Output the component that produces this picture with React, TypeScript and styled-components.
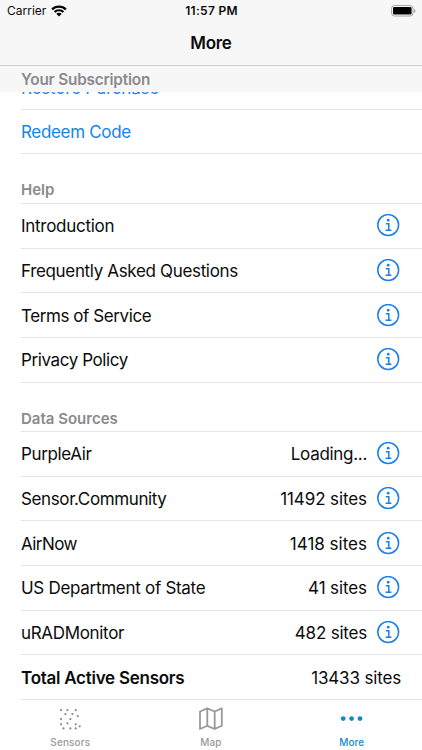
import React from "react";
import styled, { createGlobalStyle } from "styled-components";

const GlobalStyle = createGlobalStyle`
  * { box-sizing: border-box; }
  body { margin: 0; background: #fff; font-family: Inter, "Liberation Sans", sans-serif; color: #0b0b0b; }
`;

const Screen = styled.div`
  width: 422px;
  height: 750px;
  overflow: hidden;
  display: flex;
  flex-direction: column;
  background: #fff;
`;

const NavBar = styled.header`
  height: 66px;
  flex: none;
  background: #f7f7f7;
  border-bottom: 1px solid #cfcfcf;
`;

const StatusBar = styled.div`
  height: 22px;
  display: grid;
  grid-template-columns: 1fr auto 1fr;
  align-items: center;
  padding: 0 6px 0 7px;
  font-size: 12px;
  line-height: 22px;
`;

const Carrier = styled.div`
  display: flex;
  align-items: center;
  gap: 5px;
`;

const Battery = styled.div`
  display: flex;
  justify-content: flex-end;
`;

const Label = styled.span<{ $track?: number; $weight?: number }>`
  white-space: nowrap;
  letter-spacing: ${(p) => p.$track ?? 0}px;
  font-weight: ${(p) => p.$weight ?? 400};
`;

const Title = styled.h1`
  margin: 0;
  height: 43px;
  line-height: 43px;
  text-align: center;
  font-size: 17px;
  font-weight: 600;
  letter-spacing: -0.3px;
`;

const StickyHeading = styled.h2`
  margin: 0;
  flex: none;
  height: 26px;
  padding-left: 21px;
  background: #f7f7f7;
  color: #8a8a8e;
  font-size: 15.3px;
  font-weight: 600;
  line-height: 27px;
`;

const List = styled.main`
  height: 608.2px;
  flex: none;
  overflow: hidden;
  padding-left: 21px;
`;

const ClippedRow = styled.div`
  height: 17.8px;
  overflow: hidden;
  display: flex;
  align-items: flex-end;
  border-bottom: 1px solid #e5e5e7;
  color: #1683f0;
  font-size: 17px;
  line-height: 41px;
`;

const Row = styled.div<{ $link?: boolean; $plain?: boolean }>`
  height: 44.67px;
  display: flex;
  align-items: center;
  justify-content: space-between;
  padding-top: 1px;
  padding-right: ${(p) => (p.$plain ? 21 : 22)}px;
  border-bottom: 1px solid #e5e5e7;
  color: ${(p) => (p.$link ? "#1683f0" : "#0b0b0b")};
  font-size: 17px;
  line-height: 22px;
`;

const Trailing = styled.div`
  display: flex;
  align-items: center;
  gap: 10px;
`;

const SectionHeading = styled.h2`
  margin: 0;
  height: 49.5px;
  padding-top: 26px;
  border-bottom: 1px solid #e5e5e7;
  color: #8a8a8e;
  font-size: 15px;
  font-weight: 600;
  line-height: 20px;
`;

const TabBar = styled.nav`
  flex: 1;
  display: grid;
  grid-template-columns: repeat(3, 1fr);
`;

const Tab = styled.div<{ $active?: boolean }>`
  display: flex;
  flex-direction: column;
  align-items: center;
  padding-top: 5px;
  color: ${(p) => (p.$active ? "#1588cd" : "#999")};
  font-size: 10px;
  line-height: 12px;
  font-weight: 500;
  gap: 3px;
`;

const WifiIcon = () => (
  <svg width="16" height="12" viewBox="0 0 16 12" fill="#000">
    <path d="M8 .6C5 .6 2.3 1.700 .3 3.600L1.900 5.200A8.800 8.800 0 0 1 14.100 5.200L15.700 3.600C13.700 1.700 11 .6 8 .6Z" />
    <path d="M8 4.200C6 4.200 4.200 5 2.800 6.200L4.400 7.800A5.200 5.200 0 0 1 11.600 7.800L13.200 6.200C11.800 5 10 4.200 8 4.200Z" />
    <path d="M8 7.700C6.900 7.700 6 8.100 5.300 8.700L8 11.500L10.700 8.700C10 8.100 9.100 7.700 8 7.700Z" />
  </svg>
);

const BatteryIcon = () => (
  <svg width="25" height="12" viewBox="0 0 25 12">
    <rect x=".6" y=".6" width="21.400" height="10.400" rx="2.800" fill="#fff" stroke="#a0a0a0" />
    <rect x="2" y="2" width="18.600" height="7.600" rx="1.400" fill="#000" />
    <path d="M23.200 4v3.800c1-.4 1.200-1 1.200-1.900s-.3-1.600-1.200-1.900Z" fill="#999" />
  </svg>
);

const InfoIcon = () => (
  <svg width="23" height="24" viewBox="0 0 23 24" fill="none" stroke="#1a7fe8">
    <circle cx="11.200" cy="11" r="10.400" strokeWidth="1.500" />
    <circle cx="11.200" cy="6.200" r="1.350" fill="#1a7fe8" stroke="none" />
    <path d="M8.900 9.800H11.800V16.200M8.600 16.200H14.400" strokeWidth="1.500" />
  </svg>
);

const sensorDots = [
  [2, 5.1], [8.4, 5.1], [16.7, 5.1],
  [6.4, 9.1], [13.4, 9.1], [18.7, 11.1],
  [2, 14.1], [11.4, 14.1],
  [8.4, 18.3], [2, 19.3], [16.7, 19.3],
  [4.4, 23.4], [11.4, 23.4], [16.7, 23.4], [20.7, 21.3],
];

const SensorsIcon = () => (
  <svg width="22" height="28" viewBox="0 0 22 28" fill="#888">
    {sensorDots.map(([x, y]) => (
      <circle key={`${x}-${y}`} cx={x} cy={y} r="1.100" />
    ))}
  </svg>
);

const MapIcon = () => (
  <svg width="26" height="28" viewBox="0 0 26 28" fill="none" stroke="#999" strokeWidth="1.800" strokeLinejoin="round">
    <path d="M2 6.500L9.300 3.400L16.700 6.500L23.800 3.400V20.800L16.700 24L9.300 20.800L2 24ZM9.300 3.400V20.800M16.700 6.500V24" />
  </svg>
);

const MoreIcon = () => (
  <svg width="24" height="28" viewBox="0 0 24 28" fill="#1588cd">
    <circle cx="3.200" cy="13.600" r="2.400" />
    <circle cx="11.600" cy="13.600" r="2.400" />
    <circle cx="20" cy="13.600" r="2.400" />
  </svg>
);

const helpItems = [
  { name: "Introduction", track: -0.28 },
  { name: "Frequently Asked Questions", track: -0.34 },
  { name: "Terms of Service", track: -0.42 },
  { name: "Privacy Policy", track: -0.4 },
];

const sources = [
  { name: "PurpleAir", track: -0.35, value: "Loading...", valueTrack: -0.3 },
  { name: "Sensor.Community", track: -0.38, value: "11492 sites", valueTrack: -0.1 },
  { name: "AirNow", track: -0.55, value: "1418 sites", valueTrack: 0 },
  { name: "US Department of State", track: -0.29, value: "41 sites", valueTrack: -0.1 },
  { name: "uRADMonitor", track: -0.33, value: "482 sites", valueTrack: -0.2 },
];

export default function App() {
  return (
    <>
      <GlobalStyle />
      <Screen>
        <NavBar>
          <StatusBar>
            <Carrier>
              <Label>Carrier</Label>
              <WifiIcon />
            </Carrier>
            <Label $weight={600} $track={0.3}>11:57 PM</Label>
            <Battery>
              <BatteryIcon />
            </Battery>
          </StatusBar>
          <Title>More</Title>
        </NavBar>
        <StickyHeading>
          <Label $weight={600} $track={-0.17}>Your Subscription</Label>
        </StickyHeading>
        <List>
          <ClippedRow>
            <Label $track={-0.2}>Restore Purchase</Label>
          </ClippedRow>
          <Row $link>
            <Label $track={-0.33}>Redeem Code</Label>
          </Row>
          <SectionHeading>
            <Label $weight={600}>Help</Label>
          </SectionHeading>
          {helpItems.map((item) => (
            <Row key={item.name}>
              <Label $track={item.track}>{item.name}</Label>
              <InfoIcon />
            </Row>
          ))}
          <SectionHeading>
            <Label $weight={600}>Data Sources</Label>
          </SectionHeading>
          {sources.map((s) => (
            <Row key={s.name}>
              <Label $track={s.track}>{s.name}</Label>
              <Trailing>
                <Label $track={s.valueTrack}>{s.value}</Label>
                <InfoIcon />
              </Trailing>
            </Row>
          ))}
          <Row $plain>
            <Label $track={-0.26} $weight={600}>Total Active Sensors</Label>
            <Label $track={-0.16}>13433 sites</Label>
          </Row>
        </List>
        <TabBar>
          <Tab>
            <SensorsIcon />
            <Label $weight={500} $track={0.15}>Sensors</Label>
          </Tab>
          <Tab>
            <MapIcon />
            <Label $weight={500} $track={0.15}>Map</Label>
          </Tab>
          <Tab $active>
            <MoreIcon />
            <Label $weight={500}>More</Label>
          </Tab>
        </TabBar>
      </Screen>
    </>
  );
}
